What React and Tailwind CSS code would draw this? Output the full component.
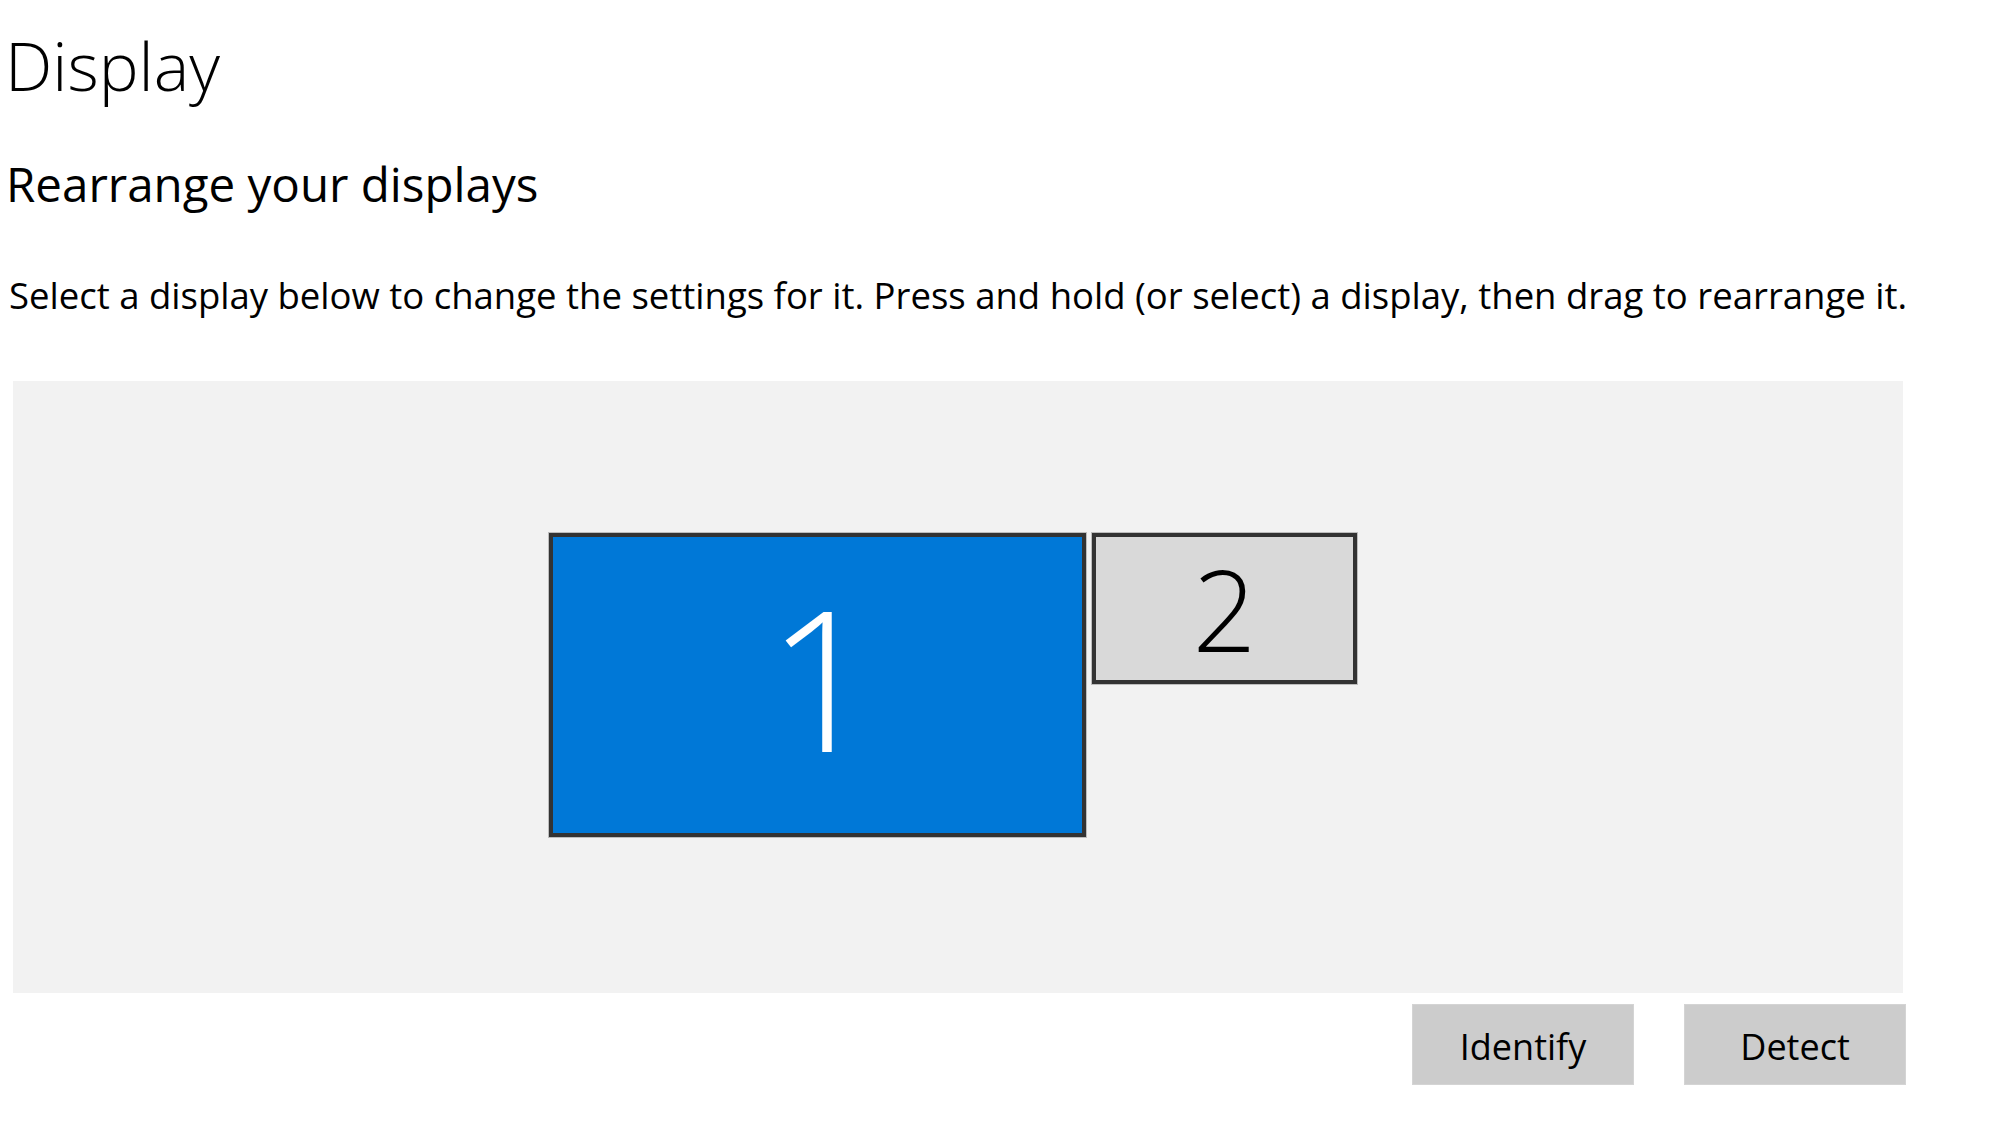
const Monitor = ({ label, w, h, fill, text, size, nudge }) => (
  <div className={`${w} ${h} border border-[#bdbdbd]`}>
    <div
      className={`flex h-full w-full items-center justify-center border-4 border-[#333333] ${fill}`}
    >
      <span className={`${size} ${text} ${nudge} font-light leading-none`}>
        {label}
      </span>
    </div>
  </div>
);

const App = () => {
  return (
    <div className="min-h-screen bg-white pl-[3px] pt-[31px] font-['Open_Sans',sans-serif] text-black">
      <h1 className="pl-[2px] text-[67px] font-light leading-[68px]">Display</h1>

      <h2 className="mt-[61px] pl-[3px] text-[47.5px] leading-[48px]">
        Rearrange your displays
      </h2>

      <p className="mt-[69px] whitespace-nowrap pl-[6px] text-[36.5px] leading-[36px]">
        Select a display below to change the settings for it. Press and hold (or
        select) a display, then drag to rearrange it.
      </p>

      <div className="ml-[10px] mt-[68px] flex h-[612px] w-[1890px] items-start gap-[4px] bg-[#f2f2f2] pl-[535px] pt-[151px]">
        <Monitor
          label="1"
          w="w-[539px]"
          h="h-[306px]"
          fill="bg-[#0078d7]"
          text="text-white"
          size="text-[195px]"
          nudge="-mt-[18px] ml-[10px]"
        />
        <Monitor
          label="2"
          w="w-[267px]"
          h="h-[153px]"
          fill="bg-[#d9d9d9]"
          text="text-black"
          size="text-[112px]"
          nudge=""
        />
      </div>

      <div className="ml-[10px] mt-[11px] flex w-[1893px] justify-end gap-[50px]">
        <button
          type="button"
          className="flex h-[81px] w-[222px] items-center justify-center border border-[#d4d4d4] bg-[#cccccc] pt-[4px] text-[36px]"
        >
          Identify
        </button>
        <button
          type="button"
          className="flex h-[81px] w-[222px] items-center justify-center border border-[#d4d4d4] bg-[#cccccc] pt-[4px] text-[36px]"
        >
          Detect
        </button>
      </div>
    </div>
  );
};

export default App;
